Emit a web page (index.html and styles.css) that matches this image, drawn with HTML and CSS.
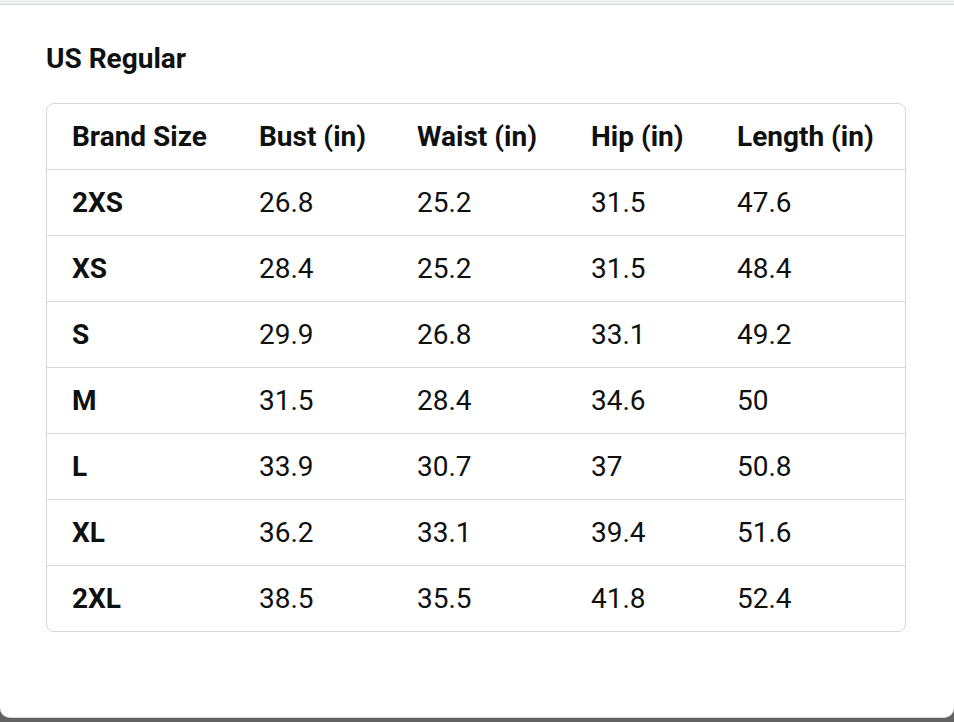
FILE: index.html
```html
<!DOCTYPE html>
<html lang="en">
<head>
<meta charset="utf-8">
<title>US Regular size chart</title>
<link rel="stylesheet" href="styles.css">
</head>
<body>
<div class="top-strip"></div>
<div class="panel">
  <h2 class="title">US Regular</h2>
  <div class="table-wrap">
    <table class="size-table">
      <colgroup>
        <col class="c1"><col class="c2"><col class="c3"><col class="c4"><col class="c5">
      </colgroup>
      <thead>
        <tr><th>Brand Size</th><th>Bust (in)</th><th>Waist (in)</th><th>Hip (in)</th><th>Length (in)</th></tr>
      </thead>
      <tbody>
        <tr><th>2XS</th><td>26.8</td><td>25.2</td><td>31.5</td><td>47.6</td></tr>
        <tr><th>XS</th><td>28.4</td><td>25.2</td><td>31.5</td><td>48.4</td></tr>
        <tr><th>S</th><td>29.9</td><td>26.8</td><td>33.1</td><td>49.2</td></tr>
        <tr><th>M</th><td>31.5</td><td>28.4</td><td>34.6</td><td>50</td></tr>
        <tr><th>L</th><td>33.9</td><td>30.7</td><td>37</td><td>50.8</td></tr>
        <tr><th>XL</th><td>36.2</td><td>33.1</td><td>39.4</td><td>51.6</td></tr>
        <tr><th>2XL</th><td>38.5</td><td>35.5</td><td>41.8</td><td>52.4</td></tr>
      </tbody>
    </table>
  </div>
</div>
</body>
</html>
```
FILE: styles.css
```css
html, body {
  margin: 0;
  padding: 0;
}
body {
  width: 954px;
  height: 722px;
  background: #626262;
  font-family: Roboto, "Liberation Sans", sans-serif;
  color: #0f1111;
  overflow: hidden;
}
.top-strip {
  height: 4px;
  background: #f0f2f2;
  border-bottom: 1px solid #d5d9d9;
}
.panel {
  box-sizing: border-box;
  height: 713px;
  background: #ffffff;
  border-bottom: 1px solid #d5d9d9;
  border-radius: 0 0 10px 10px;
  padding: 36px 0 0 46px;
}
.title {
  margin: 0 0 26px 0;
  font-size: 28px;
  line-height: 36px;
  font-weight: 700;
}
.table-wrap {
  width: 858px;
  border: 1px solid #d5d9d9;
  border-radius: 8px;
  overflow: hidden;
}
.size-table {
  width: 858px;
  table-layout: fixed;
  border-collapse: collapse;
  border-spacing: 0;
  font-size: 28px;
}
.c1 { width: 187px; }
.c2 { width: 158px; }
.c3 { width: 174px; }
.c4 { width: 146px; }
.c5 { width: 193px; }
.size-table th,
.size-table td {
  height: 65px;
  padding: 0 0 0 25px;
  text-align: left;
  vertical-align: middle;
  white-space: nowrap;
  box-sizing: border-box;
}
.size-table tbody th,
.size-table tbody td {
  height: 66px;
}
.size-table th { font-weight: 700; }
.size-table td { font-weight: 400; }
.size-table tbody tr {
  border-top: 1px solid #d5d9d9;
}
```
